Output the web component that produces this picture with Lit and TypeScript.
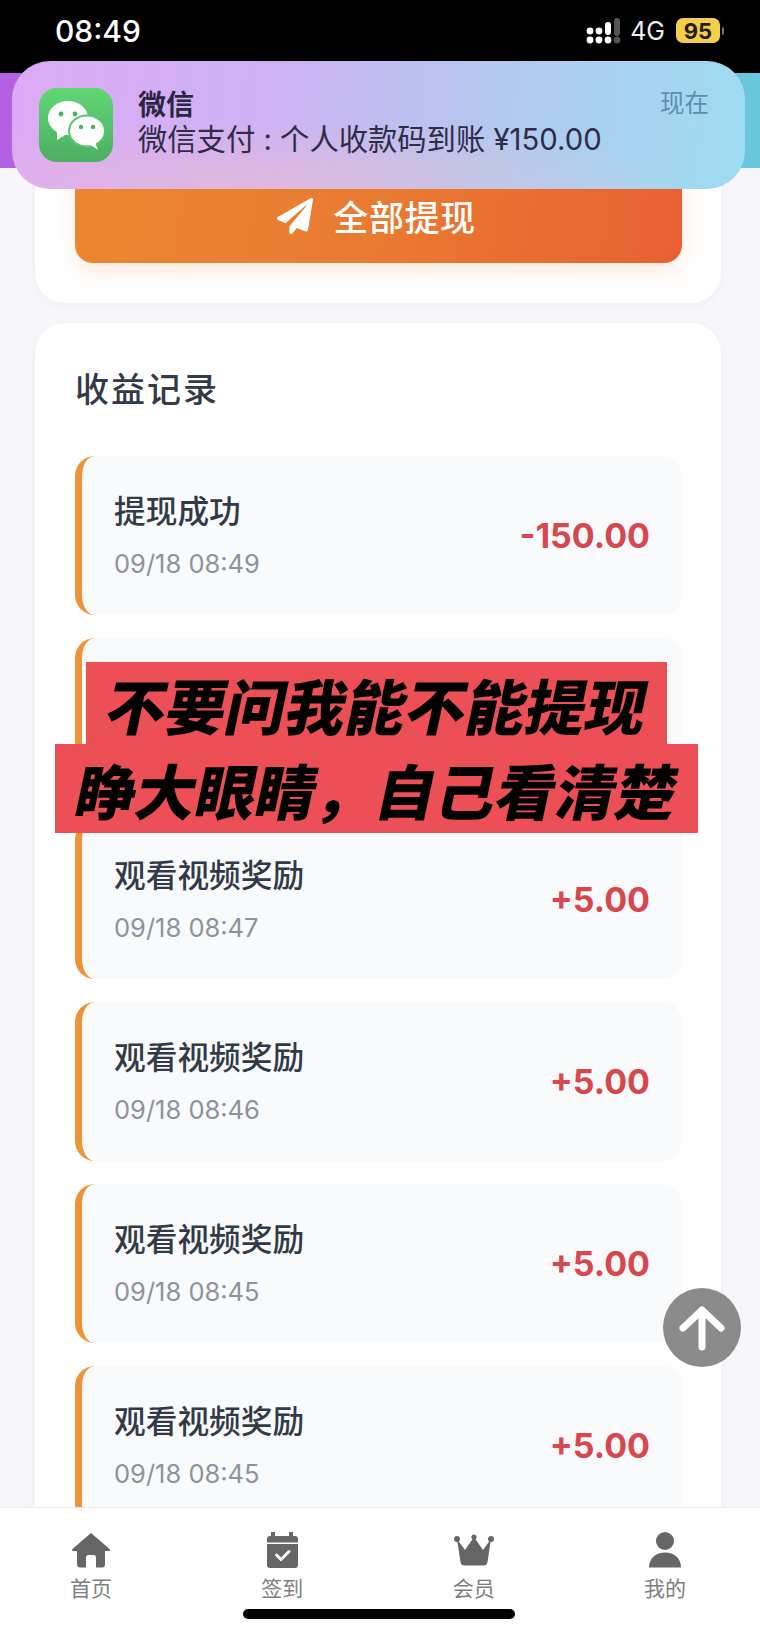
import { LitElement, html, css, svg } from "lit";
import { customElement } from "lit/decorators.js";

const rows = [
  { title: "提现成功", time: "09/18 08:49", amount: "-150.00" },
  { title: "观看视频奖励", time: "09/18 08:48", amount: "+5.00" },
  { title: "观看视频奖励", time: "09/18 08:47", amount: "+5.00" },
  { title: "观看视频奖励", time: "09/18 08:46", amount: "+5.00" },
  { title: "观看视频奖励", time: "09/18 08:45", amount: "+5.00" },
  { title: "观看视频奖励", time: "09/18 08:45", amount: "+5.00" },
];

const tabs = [
  {
    label: "首页",
    icon: svg`<svg width="40" height="36" viewBox="0 0 40 36"><path fill="#666" d="M20 1 L38.6 17 Q39.8 19 37.4 19 H34 V32 Q34 35.5 31 35.5 H25 V25.5 Q25 23 22.5 23 H17.5 Q15 23 15 25.5 V35.5 H9 Q6 35.5 6 32 V19 H2.6 Q.2 19 1.4 17 Z"/></svg>`,
  },
  {
    label: "签到",
    icon: svg`<svg width="40" height="36" viewBox="0 0 40 36"><path fill="#666" d="M9 0.5 a2 2 0 0 1 4 0 V4 H27 V0.5 a2 2 0 0 1 4 0 V4 H33 a3 3 0 0 1 3 3 V10.5 H5 V7 a3 3 0 0 1 3-3 H9 Z M5 12 H36 V33 a3 3 0 0 1-3 3 H8 a3 3 0 0 1-3-3 Z"/><path fill="none" stroke="#fff" stroke-width="3" stroke-linecap="round" stroke-linejoin="round" d="M14.5 23 L19 27.5 L27 19.5"/></svg>`,
  },
  {
    label: "会员",
    icon: svg`<svg width="40" height="36" viewBox="0 0 40 36"><path fill="#666" d="M3 7 L11 18 L20 5 L29 18 L37 7 L33.5 30 Q33 33.5 29.5 33.5 H10.5 Q7 33.5 6.5 30 Z"/><circle fill="#666" cx="3" cy="7" r="3"/><circle fill="#666" cx="20" cy="5" r="2.6"/><circle fill="#666" cx="37" cy="7" r="3"/></svg>`,
  },
  {
    label: "我的",
    icon: svg`<svg width="40" height="36" viewBox="0 0 40 36"><circle fill="#666" cx="20" cy="9" r="9"/><path fill="#666" d="M4 35.5 C4 26 11 20.5 20 20.5 C29 20.5 36 26 36 35.5 Z"/></svg>`,
  },
];

@customElement("app-root")
export class AppRoot extends LitElement {
  static styles = css`
    :host {
      display: block;
      position: relative;
      width: 760px;
      height: 1625px;
      overflow: hidden;
      background: #f6f6fb;
      font-family: Inter, "Noto Sans CJK SC", sans-serif;
    }
    .status {
      height: 73px;
      background: #000;
      color: #fff;
      display: flex;
      align-items: center;
      padding: 0 36px 12px 55px;
      box-sizing: border-box;
      justify-content: space-between;
    }
    .clock { font-size: 30px; font-weight: 500; }
    .status-right { display: flex; align-items: center; }
    .net { font-size: 25px; margin: 0 11px 0 9px; color: #eee; }
    .battery {
      width: 44px; height: 25px; border-radius: 7px;
      background: #f4d04a; color: #221c08;
      font-size: 22px; font-weight: 700;
      display: flex; align-items: center; justify-content: center;
    }
    .nub { width: 2px; height: 8px; margin-left: 2px; background: #777; border-radius: 0 2px 2px 0; }
    .header {
      height: 95px;
      background: linear-gradient(90deg, #b55fe2 0%, #8f8fdf 50%, #68c8dc 100%);
    }
    .main {
      padding: 0 39px 0 35px;
      display: flex;
      flex-direction: column;
      gap: 20px;
    }
    .card {
      background: #fff;
      border-radius: 30px;
      box-shadow: 0 2px 10px rgba(60, 60, 100, 0.04);
    }
    .top-card { padding: 0 39px 40px 40px; border-radius: 0 0 30px 30px; }
    .withdraw {
      height: 95px;
      border-radius: 0 0 18px 18px;
      background: linear-gradient(100deg, #ec8630 0%, #e97a30 50%, #e96033 100%);
      box-shadow: 0 10px 22px rgba(238, 130, 50, 0.16);
      color: #fff;
      font-size: 35px;
      font-weight: 500;
      letter-spacing: 0.6px;
      display: flex;
      align-items: center;
      justify-content: center;
      gap: 20px;
    }
    .withdraw svg { margin-left: -4px; }
    .list-card { padding: 47px 39px 40px 40px; }
    h2 {
      margin: 0 0 46px;
      font-size: 34px;
      line-height: 40px;
      letter-spacing: 2px;
      font-weight: 500;
      color: #333a47;
    }
    .rows { display: flex; flex-direction: column; gap: 23px; }
    .row {
      height: 159px;
      box-sizing: border-box;
      border-radius: 20px;
      border-left: 7px solid #ec9436;
      background: #f8fafb;
      padding: 0 32px 0 32px;
      display: flex;
      align-items: center;
      justify-content: space-between;
    }
    .row-title { font-size: 31.7px; line-height: 40px; font-weight: 500; color: #333a47; }
    .row-time { font-size: 25.5px; line-height: 32px; margin-top: 16px; color: #8d929c; }
    .amount { font-size: 34px; font-weight: 700; color: #d8474e; }
    .notice {
      position: absolute;
      left: 12px; top: 61px;
      width: 733px; height: 128px;
      box-sizing: border-box;
      border-radius: 38px;
      background:
        radial-gradient(420px 70px at 35% 100%, rgba(240, 190, 200, 0.55), transparent),
        linear-gradient(95deg, #dcaaf6 0%, #cdb2f4 35%, #b4c8ef 65%, #9cdcf0 100%);
      display: flex;
      padding: 27px 36px 0 27px;
      color: #2b2740;
    }
    .app-icon {
      width: 74px; height: 74px; border-radius: 18px;
      background: linear-gradient(180deg, #5fd675, #4cae62);
      flex: none;
    }
    .notice-text { flex: 1; margin-left: 25px; }
    .notice-title { font-size: 28px; line-height: 34px; font-weight: 700; }
    .notice-body { font-size: 29.3px; line-height: 36px; color: #2f2c48; white-space: nowrap; }
    .now { font-size: 24.5px; line-height: 30px; color: #5c8fb0; }
    .banner {
      position: absolute;
      left: 0; top: 662px;
      width: 753px;
      display: flex;
      flex-direction: column;
      align-items: center;
      color: #000;
      font-size: 60px;
      font-weight: 900;
    }
    .line {
      background: #ec4f55;
      display: flex;
      align-items: center;
      justify-content: center;
      white-space: nowrap;
      box-sizing: border-box;
    }
    .line span { display: block; transform: skewX(-12deg); line-height: 70px; }
    .l1 { width: 581px; height: 82px; padding-top: 10px; }
    .l2 { width: 643px; height: 89px; padding-top: 8px; }
    .up {
      position: absolute;
      left: 663px; top: 1288px;
      width: 78px; height: 79px;
      border-radius: 50%;
      background: #8b8b8b;
      display: flex; align-items: center; justify-content: center;
    }
    .tabbar {
      position: absolute;
      left: 0; right: 0; bottom: 0;
      height: 118px;
      box-sizing: border-box;
      background: #fff;
      border-top: 1px solid #ececec;
      display: flex;
      justify-content: space-between;
      padding: 24px 75px 0 71px;
    }
    .tab {
      width: 40px;
      display: flex; flex-direction: column; align-items: center;
      color: #7e7e7e;
      font-size: 21px;
      white-space: nowrap;
    }
    .tab svg { display: block; margin-bottom: 7px; }
    .tab span { line-height: 28px; }
    .home {
      position: absolute;
      left: 243px; top: 1609px;
      width: 272px; height: 10px;
      border-radius: 5px;
      background: #000;
    }
  `;

  render() {
    return html`
      <div class="status">
        <span class="clock">08:49</span>
        <div class="status-right">
          <svg width="36" height="28" viewBox="0 0 36 28">
            <g fill="#fff">
              <circle cx="5" cy="14" r="3.4"/><circle cx="14" cy="14" r="3.4"/>
              <rect x="20" y="5" width="6" height="13" rx="3"/>
              <circle cx="5" cy="23" r="3.4"/><circle cx="14" cy="23" r="3.4"/><circle cx="23" cy="23" r="3.4"/>
            </g>
            <g fill="#555">
              <rect x="29" y="1" width="6" height="18" rx="3"/>
              <circle cx="32" cy="23" r="3.4"/>
            </g>
          </svg>
          <span class="net">4G</span>
          <span class="battery">95</span>
          <span class="nub"></span>
        </div>
      </div>
      <div class="header"></div>
      <div class="main">
        <div class="card top-card">
          <div class="withdraw">
            <svg width="36" height="36" viewBox="0 0 512 512">
              <path fill="#fff" d="M476 3.2L12.5 270.6c-18.1 10.4-15.8 35.6 2.2 43.2L121 358.4l287.3-253.2c5.5-4.9 13.3 2.6 8.6 8.3L176 407v80.5c0 23.6 28.5 32.9 42.5 15.8L282 426l124.6 52.2c14.2 6 30.4-2.9 33-18.2l72-432C515 7.8 493.3-6.8 476 3.2z"/>
            </svg>
            <span>全部提现</span>
          </div>
        </div>
        <div class="card list-card">
          <h2>收益记录</h2>
          <div class="rows">
            ${rows.map(
              (r) => html`
                <div class="row">
                  <div>
                    <div class="row-title">${r.title}</div>
                    <div class="row-time">${r.time}</div>
                  </div>
                  <div class="amount">${r.amount}</div>
                </div>
              `
            )}
          </div>
        </div>
      </div>

      <div class="notice">
        <div class="app-icon">
          <svg width="74" height="74" viewBox="0 0 74 74">
            <ellipse cx="29" cy="30" rx="20" ry="17" fill="#fff"/>
            <path d="M18 43 L18 52 L28 46 Z" fill="#fff"/>
            <ellipse cx="48" cy="43" rx="19" ry="16.5" fill="#58c66e"/>
            <ellipse cx="48" cy="43" rx="17" ry="14.5" fill="#fff"/>
            <path d="M56 54 L59 62 L50 56 Z" fill="#fff"/>
            <circle cx="22" cy="26" r="2.4" fill="#4cae62"/><circle cx="36" cy="26" r="2.4" fill="#4cae62"/>
            <circle cx="42" cy="39" r="2.2" fill="#4cae62"/><circle cx="54" cy="39" r="2.2" fill="#4cae62"/>
          </svg>
        </div>
        <div class="notice-text">
          <div class="notice-title">微信</div>
          <div class="notice-body">微信支付 : 个人收款码到账 ¥150.00</div>
        </div>
        <div class="now">现在</div>
      </div>

      <div class="banner">
        <div class="line l1"><span>不要问我能不能提现</span></div>
        <div class="line l2"><span>睁大眼睛，自己看清楚</span></div>
      </div>

      <div class="up">
        <svg width="46" height="46" viewBox="0 0 46 46" fill="none" stroke="#fff" stroke-width="7" stroke-linecap="round" stroke-linejoin="round">
          <path d="M23 42 V5 M4 23 L23 5 L42 23"/>
        </svg>
      </div>

      <div class="tabbar">
        ${tabs.map((t) => html`<div class="tab">${t.icon}<span>${t.label}</span></div>`)}
      </div>
      <div class="home"></div>
    `;
  }
}
